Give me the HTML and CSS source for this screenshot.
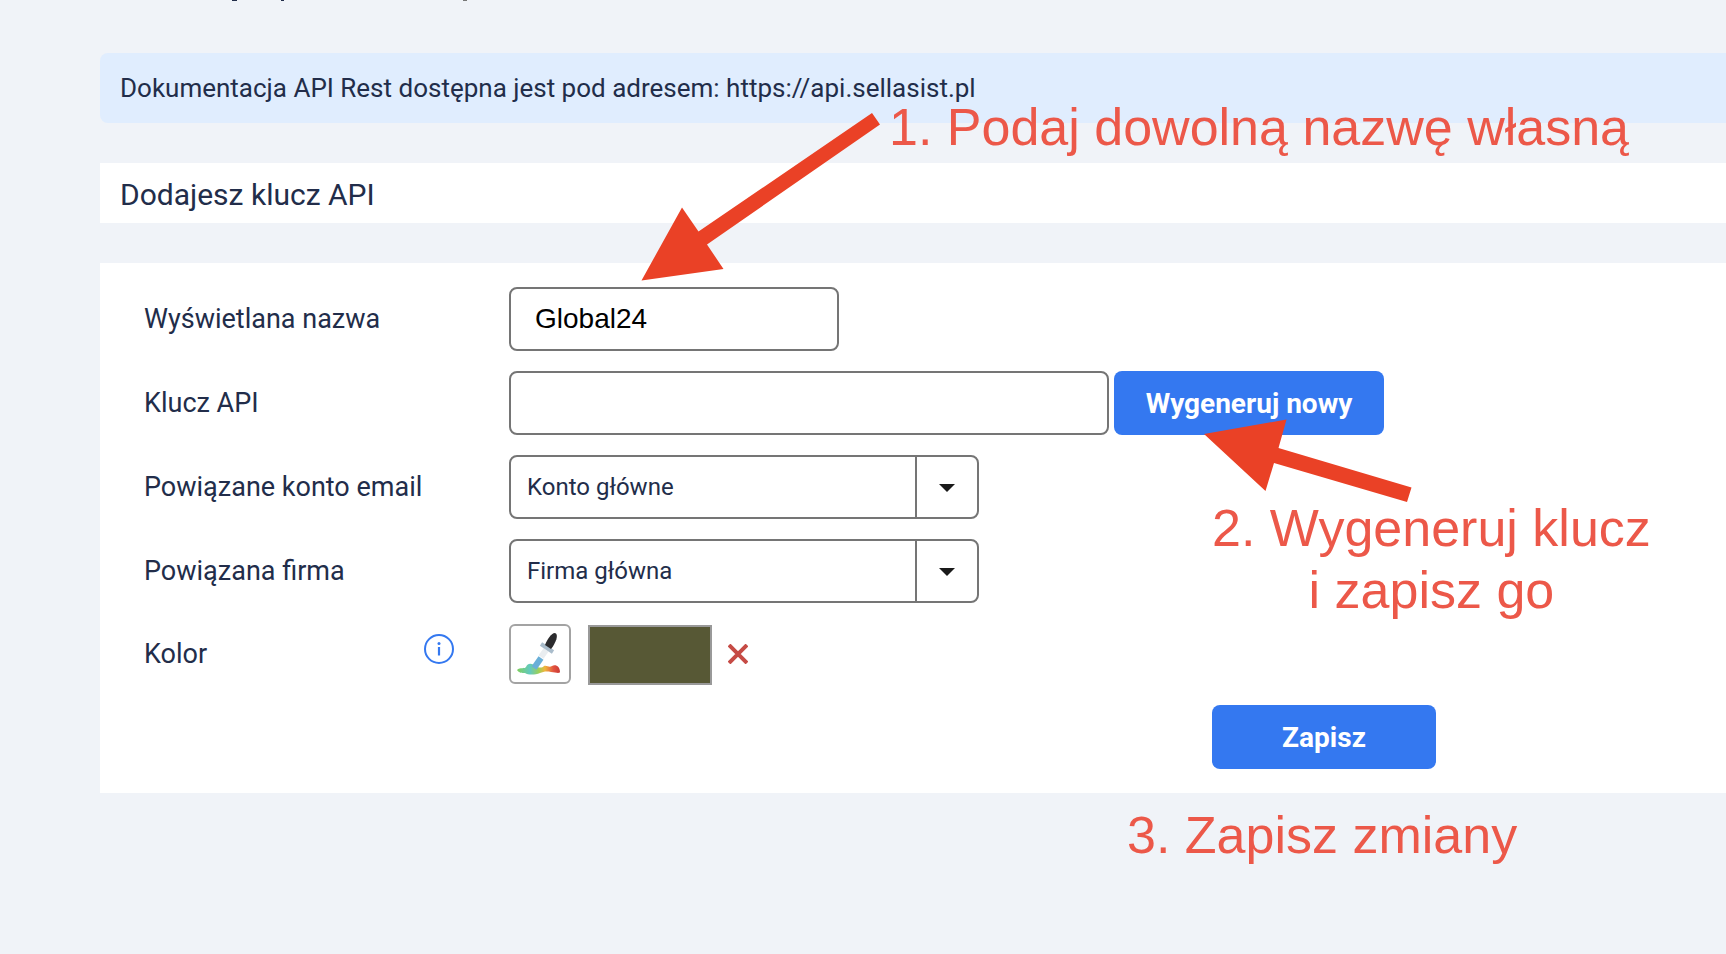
FILE: index.html
```
<!doctype html>
<html lang="pl">
	<head>
		<meta charset="utf-8">
		<meta name="viewport" content="width=device-width, initial-scale=1">
		<title>Klucz API</title>

		<link rel="stylesheet" href="styles.css">
	</head>
	<body>
		<!-- Tail of the heading that is scrolled off -->
		<svg class="scrolled" viewBox="0 0 500 2" fill="#222d4a">
			<path d="M232 0h5v1h-5zM281 0h3v1h-3z"/>
			<path d="M463 0h4v1h-4z" fill="#777"/>
		</svg>

		<main>
			<p class="info">Dokumentacja API Rest dostępna jest pod adresem: https://api.sellasist.pl</p>

			<h2 class="title">Dodajesz klucz API</h2>

			<form class="panel">
				<div class="row">
					<label for="name">Wyświetlana nazwa</label>
					<input type="text" id="name" value="Global24">
				</div>

				<div class="row">
					<label for="key">Klucz API</label>
					<input type="text" id="key">
					<button type="button" class="btn generate">Wygeneruj nowy</button>
				</div>

				<div class="row">
					<label for="email">Powiązane konto email</label>
					<div class="select">
						<select id="email">
							<option>Konto główne</option>
						</select>
					</div>
				</div>

				<div class="row">
					<label for="company">Powiązana firma</label>
					<div class="select">
						<select id="company">
							<option>Firma główna</option>
						</select>
					</div>
				</div>

				<div class="row color">
					<label for="picker">Kolor
						<svg class="hint" viewBox="0 0 30 30">
							<circle cx="15" cy="15" r="14" fill="none" stroke="#3478f0" stroke-width="2"/>
							<circle cx="15" cy="9.5" r="1.5" fill="#3478f0"/>
							<path d="M15 13v8.5" stroke="#3478f0" stroke-width="2.2"/>
						</svg>
					</label>
					<button type="button" id="picker" class="picker" aria-label="Wybierz kolor">
						<svg viewBox="0 0 58 56">
							<defs>
								<linearGradient id="paint">
									<stop offset="0" stop-color="#7fd05c"/>
									<stop offset=".3" stop-color="#62c9c0"/>
									<stop offset=".5" stop-color="#9bd05a"/>
									<stop offset=".65" stop-color="#f0b53c"/>
									<stop offset=".85" stop-color="#e2523f"/>
									<stop offset="1" stop-color="#c93a35"/>
								</linearGradient>
							</defs>
							<path d="M6 44c3-3 8-1 9-3 2-5 7-3 10-1 3 2 6 2 8 0 3-1 5 2 8 0 4-2 8 1 8 6-1 2-5 0-9 0-5-1-8 0-11 1-5 2-12 2-15 0-3 0-6 0-8-3z" fill="url(#paint)"/>
							<path d="M23 42l7-10" stroke="#69afd8" stroke-width="6"/>
							<path d="M30 31l5-7" stroke="#e9edf0" stroke-width="6"/>
							<path d="M30 18l12 8" stroke="#a9bccb" stroke-width="4"/>
							<path d="M34 19c2-5 6-12 10-12 4 1 1 10-4 16z" fill="#2b2b2d"/>
						</svg>
					</button>
					<span class="swatch"></span>
					<button type="button" class="clear" aria-label="Usuń kolor">
						<svg viewBox="0 0 20 20"><path d="M1 1l18 18M19 1L1 19" stroke="#c64b45" stroke-width="4"/></svg>
					</button>
				</div>

				<button type="submit" class="btn save">Zapisz</button>
			</form>
		</main>

		<!-- Instruction steps over the form -->
		<svg class="arrow arrow1" viewBox="0 0 240 170" fill="#ea4126">
			<path d="M1.500 168.500L42 95.500L58.500 119.500L232 1L240 12.500L67 132.500L83.500 157z"/>
		</svg>
		<svg class="arrow arrow2" viewBox="0 0 208 84" fill="#ea4126">
			<path d="M0 15L82.500 .5L74.500 29L207.500 68.500L203 83L70 44L61.500 72z"/>
		</svg>
		<p class="step step1">1. Podaj dowolną nazwę własną</p>
		<p class="step step2">2. Wygeneruj klucz<br>i zapisz go</p>
		<p class="step step3">3. Zapisz zmiany</p>
	</body>
</html>
```
FILE: styles.css
```
			* {
			    box-sizing: border-box;
			}

			body {
			    position: relative;
			    margin: 0;
			    min-height: 100vh;
			    overflow-x: hidden;
			    background: #f0f3f8;
			    color: #222d4a;
			    font-family: Roboto, sans-serif;
			    font-size: 26px;
			}

			.scrolled {
			    position: absolute;
			    top: 0;
			    left: 0;
			    width: 500px;
			}

			main {
			    display: flex;
			    flex-direction: column;
			    gap: 40px;
			    padding: 53px 0 0 100px;
			}

			.info {
			    margin: 0;
			    padding: 20px;
			    line-height: 30px;
			    background: #e0edfe;
			    border-radius: 8px 0 0 8px;
			}

			.title {
			    margin: 0;
			    padding: 12px 20px 8px;
			    background: #fff;
			    font-size: 30px;
			    font-weight: 400;
			    line-height: 40px;
			}

			.panel {
			    display: flex;
			    flex-direction: column;
			    gap: 20px;
			    padding: 24px 44px;
			    background: #fff;
			}

			.row {
			    display: flex;
			    align-items: center;
			    height: 64px;
			}

			.color {
			    height: 62px;
			}

			label {
			    display: flex;
			    align-items: center;
			    justify-content: space-between;
			    width: 365px;
			    padding-right: 55px;
			    font-size: 27px;
			}

			.hint {
			    width: 30px;
			    height: 30px;
			    margin-bottom: 10px;
			}

			input {
			    width: 600px;
			    height: 64px;
			    padding: 0 24px;
			    border: 2px solid #757575;
			    border-radius: 8px;
			    color: #000;
			    font-family: "Liberation Sans", sans-serif;
			    font-size: 28px;
			}

			#name {
			    width: 330px;
			}

			.select {
			    position: relative;
			    width: 470px;
			}

			.select::before {
			    content: "";
			    position: absolute;
			    top: 0;
			    right: 62px;
			    height: 64px;
			    border-left: 2px solid #757575;
			}

			.select::after {
			    content: "";
			    position: absolute;
			    top: 29px;
			    right: 24px;
			    border: 8px solid transparent;
			    border-top-color: #1a1a1a;
			    border-bottom: 0;
			}

			select {
			    appearance: none;
			    display: block;
			    width: 100%;
			    height: 64px;
			    padding: 0 16px;
			    border: 2px solid #757575;
			    border-radius: 8px;
			    background: #fff;
			    color: #222d4a;
			    font-family: Roboto, sans-serif;
			    font-size: 24px;
			}

			.btn {
			    height: 64px;
			    border: 0;
			    border-radius: 8px;
			    background: #3478f0;
			    color: #fff;
			    font-family: Roboto, sans-serif;
			    font-size: 28px;
			    font-weight: 700;
			}

			.generate {
			    width: 270px;
			    margin-left: 5px;
			}

			.save {
			    width: 224px;
			    margin-left: 1068px;
			}

			.picker {
			    width: 62px;
			    height: 60px;
			    padding: 0;
			    border: 2px solid #a3a3a3;
			    border-radius: 6px;
			    background: #fff;
			}

			.picker svg, .clear svg {
			    display: block;
			}

			.swatch {
			    align-self: flex-end;
			    width: 124px;
			    height: 60px;
			    margin-left: 17px;
			    border: 2px solid #999;
			    background: #575835;
			}

			.clear {
			    width: 20px;
			    height: 20px;
			    margin-left: 16px;
			    padding: 0;
			    border: 0;
			    background: none;
			}

			.arrow, .step {
			    position: absolute;
			    pointer-events: none;
			}

			.arrow1 {
			    top: 112px;
			    left: 640px;
			    width: 240px;
			}

			.arrow2 {
			    top: 419px;
			    left: 1204px;
			    width: 208px;
			}

			.step {
			    margin: 0;
			    color: #ec5849;
			    font-family: "Liberation Sans", sans-serif;
			    font-size: 52px;
			    line-height: 62px;
			    text-align: center;
			    white-space: nowrap;
			}

			.step1 {
			    top: 96px;
			    left: 889px;
			}

			.step2 {
			    top: 497px;
			    left: 1212px;
			}

			.step3 {
			    top: 804px;
			    left: 1127px;
			}
```
